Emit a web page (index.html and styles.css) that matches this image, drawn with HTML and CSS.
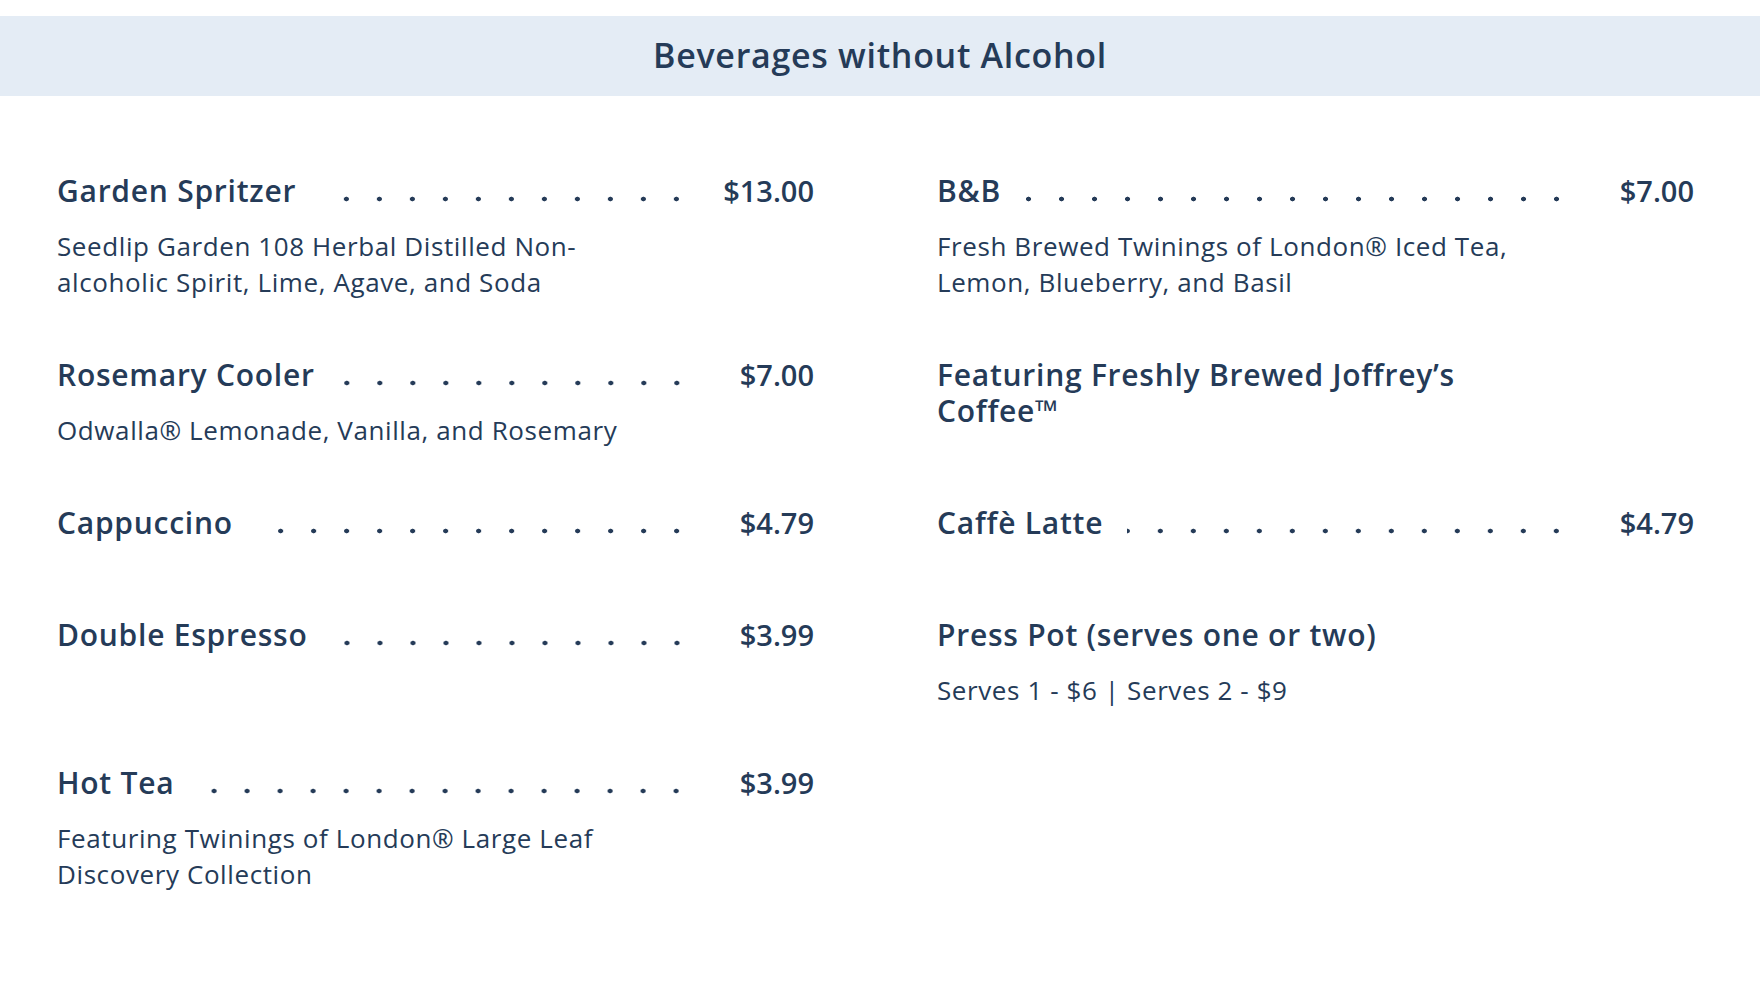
FILE: index.html
```html
<!DOCTYPE html>
<html lang="en">
<head>
<meta charset="utf-8">
<title>Beverages without Alcohol</title>
<link rel="stylesheet" href="styles.css">
</head>
<body>
<header class="banner"><h1 class="banner-title">Beverages without Alcohol</h1></header>
<main class="menu">
  <section class="column">
    <article class="item">
      <div class="item-head"><h2 class="name">Garden Spritzer</h2><span class="dots"></span><span class="price">$13.00</span></div>
      <p class="desc">Seedlip Garden 108 Herbal Distilled Non-alcoholic Spirit, Lime, Agave, and Soda</p>
    </article>
    <article class="item">
      <div class="item-head"><h2 class="name">Rosemary Cooler</h2><span class="dots"></span><span class="price">$7.00</span></div>
      <p class="desc">Odwalla® Lemonade, Vanilla, and Rosemary</p>
    </article>
    <article class="item">
      <div class="item-head"><h2 class="name">Cappuccino</h2><span class="dots"></span><span class="price">$4.79</span></div>
    </article>
    <article class="item">
      <div class="item-head"><h2 class="name">Double Espresso</h2><span class="dots"></span><span class="price">$3.99</span></div>
      <p class="desc">&nbsp;</p>
    </article>
    <article class="item">
      <div class="item-head"><h2 class="name">Hot Tea</h2><span class="dots"></span><span class="price">$3.99</span></div>
      <p class="desc">Featuring Twinings of London® Large Leaf Discovery Collection</p>
    </article>
  </section>
  <section class="column">
    <article class="item">
      <div class="item-head"><h2 class="name">B&amp;B</h2><span class="dots"></span><span class="price">$7.00</span></div>
      <p class="desc">Fresh Brewed Twinings of London® Iced Tea, Lemon, Blueberry, and Basil</p>
    </article>
    <article class="item">
      <h2 class="heading">Featuring Freshly Brewed Joffrey’s Coffee™</h2>
    </article>
    <article class="item">
      <div class="item-head"><h2 class="name">Caffè Latte</h2><span class="dots"></span><span class="price">$4.79</span></div>
    </article>
    <article class="item">
      <div class="item-head"><h2 class="name">Press Pot (serves one or two)</h2></div>
      <p class="desc">Serves 1 - $6 | Serves 2 - $9</p>
    </article>
  </section>
</main>
</body>
</html>
```
FILE: styles.css
```css
html, body {
  margin: 0;
  padding: 0;
  background: #ffffff;
}

body {
  font-family: "Open Sans", Lato, "Liberation Sans", sans-serif;
  color: #253b58;
}

.banner {
  margin-top: 16px;
  height: 80px;
  background: #e4ecf5;
  display: flex;
  align-items: center;
  justify-content: center;
}

.banner-title {
  margin: 0;
  font-size: 34px;
  font-weight: 600;
  line-height: 40px;
  letter-spacing: 0.7px;
  color: #253b58;
  transform: translateY(-1px);
}

.menu {
  display: grid;
  grid-template-columns: 1fr 1fr;
  column-gap: 123px;
  padding: 77px 66px 0 57px;
}

.column {
  display: flex;
  flex-direction: column;
}

.item {
  margin-bottom: 57px;
}

.item-head,
.heading {
  margin: 0 0 19px;
}

.item-head {
  display: flex;
  align-items: stretch;
  height: 36px;
}

.name,
.heading {
  font-size: 30px;
  font-weight: 600;
  line-height: 36px;
  letter-spacing: 0.75px;
  white-space: nowrap;
}

.name {
  margin: 0;
}

.heading {
  white-space: normal;
  max-width: 600px;
}

.dots {
  flex: 1;
  margin-left: 24px;
  background-image: radial-gradient(circle at 3.5px 26px, #253b58 2.1px, transparent 2.7px);
  background-size: 33px 36px;
  background-repeat: repeat-x;
  background-position: right top;
}

.price {
  min-width: 108px;
  text-align: right;
  font-size: 29px;
  font-weight: 600;
  line-height: 36px;
}

.desc {
  margin: 0;
  max-width: 600px;
  font-size: 26px;
  line-height: 36px;
  letter-spacing: 0.6px;
  font-weight: 400;
}
```
